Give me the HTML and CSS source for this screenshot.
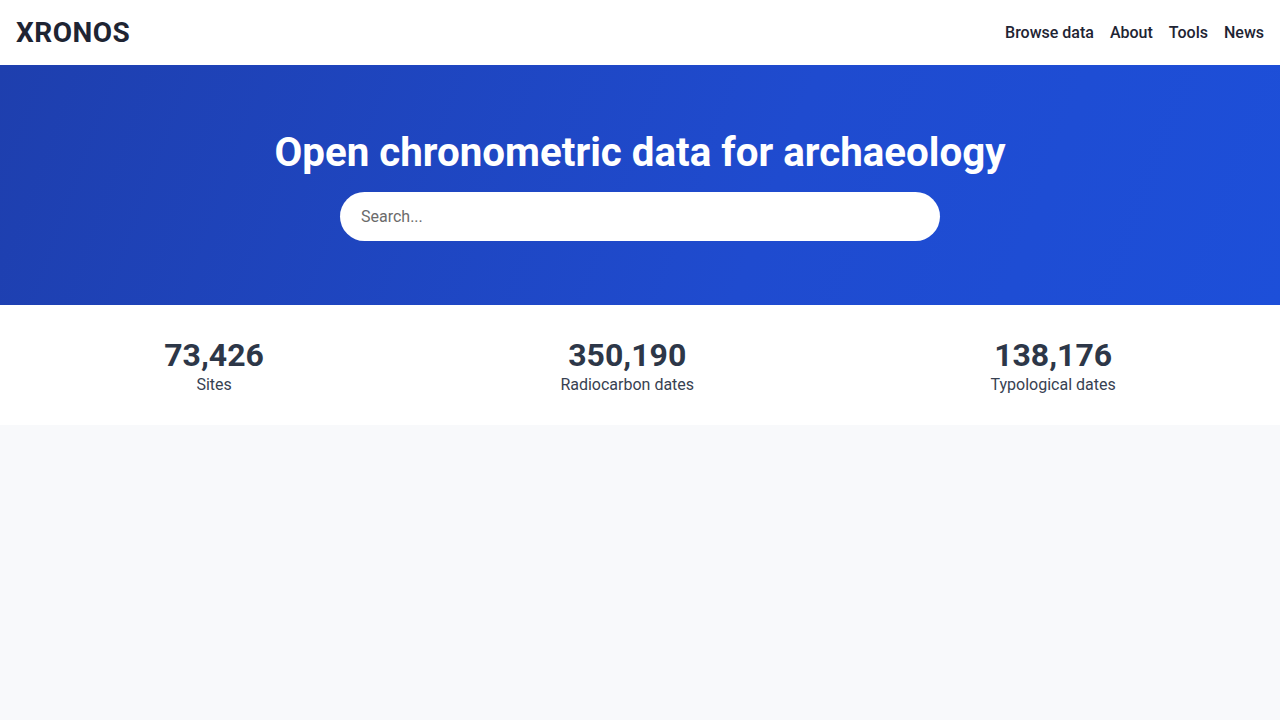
FILE: index.html
```html
<!DOCTYPE html>
<html lang="en">
<head>
<meta charset="utf-8">
<title>XRONOS</title>
<link rel="stylesheet" href="styles.css">
</head>
<body>
<header class="topbar">
  <a class="logo" href="#">XRONOS</a>
  <nav class="nav">
    <a href="#">Browse data</a>
    <a href="#">About</a>
    <a href="#">Tools</a>
    <a href="#">News</a>
  </nav>
</header>
<section class="hero">
  <h1 class="hero-title">Open chronometric data for archaeology</h1>
  <input class="search" type="text" placeholder="Search...">
</section>
<section class="stats">
  <div class="stat">
    <div class="stat-num">73,426</div>
    <div class="stat-label">Sites</div>
  </div>
  <div class="stat">
    <div class="stat-num">350,190</div>
    <div class="stat-label">Radiocarbon dates</div>
  </div>
  <div class="stat">
    <div class="stat-num">138,176</div>
    <div class="stat-label">Typological dates</div>
  </div>
</section>
</body>
</html>
```

FILE: styles.css
```css
* { box-sizing: border-box; }
html, body { margin: 0; padding: 0; }
body {
  font-family: Roboto, "Liberation Sans", sans-serif;
  background: #f8f9fb;
  color: #1f2937;
  min-height: 720px;
}
a { text-decoration: none; color: inherit; }
.topbar {
  height: 65px;
  background: #ffffff;
  display: flex;
  align-items: center;
  justify-content: space-between;
  padding: 0 16px;
}
.logo {
  font-size: 28px;
  font-weight: 700;
  color: #1e2433;
  letter-spacing: 0.5px;
}
.nav {
  display: flex;
  gap: 16px;
}
.nav a {
  font-size: 16px;
  font-weight: 500;
  color: #1e2433;
}
.hero {
  background: linear-gradient(110deg, #1e3fae 0%, #1f4bcf 60%, #1d4fd9 100%);
  padding: 64px 16px;
  display: flex;
  flex-direction: column;
  align-items: center;
}
.hero-title {
  margin: 0 0 16px;
  font-size: 40.3px;
  line-height: 47px;
  font-weight: 700;
  color: #ffffff;
}
.search {
  width: 600px;
  height: 49px;
  border: none;
  border-radius: 999px;
  background: #ffffff;
  padding: 0 21px;
  font-family: Roboto, "Liberation Sans", sans-serif;
  font-size: 16px;
  color: #1f2937;
  outline: none;
}
.search::placeholder { color: #6b6b6b; }
.stats {
  background: #ffffff;
  display: flex;
  padding: 32px 16px 28px;
}
.stat {
  flex: 1 1 auto;
  text-align: center;
}
.stat-num {
  font-size: 32px;
  line-height: 36px;
  font-weight: 700;
  color: #2d3748;
}
.stat-label {
  font-size: 16px;
  line-height: 24px;
  color: #374151;
}
```
